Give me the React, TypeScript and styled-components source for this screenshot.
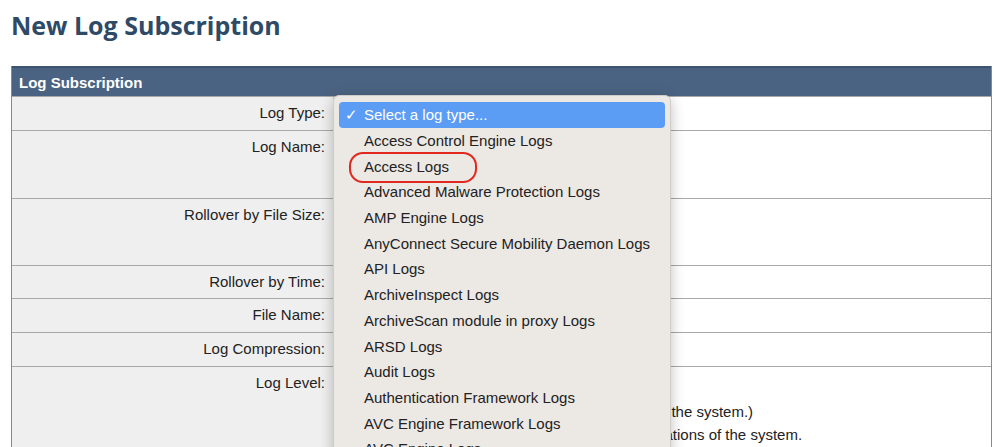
import styled, { createGlobalStyle } from 'styled-components';

const Global = createGlobalStyle`
  body { margin: 0; background: #fff; font-family: "Liberation Sans", Arial, sans-serif; }
`;

const Page = styled.div`
  padding: 8px 8px 0 11px;
  position: relative;
  height: 447px;
  overflow: hidden;
  box-sizing: border-box;
`;

const Title = styled.h1`
  margin: 0 0 24px;
  font-family: "Open Sans", sans-serif;
  font-size: 25px;
  font-weight: 700;
  color: #2e4a66;
`;

const Table = styled.div`
  width: 979px;
  border: 1px solid #8a8a8a;
  border-top: 0;
`;

const Header = styled.div`
  height: 28px;
  background: #4b6382;
  color: #fff;
  font-weight: 700;
  font-size: 15px;
  display: flex;
  align-items: center;
  padding-left: 7px;
  border-top: 2px solid #3d536f;
`;

const Row = styled.div<{ h: number }>`
  display: grid;
  grid-template-columns: 322px 1fr;
  height: ${p => p.h}px;
  border-top: 1px solid #a8a8a8;
  &:first-of-type { border-top: 0; }
`;

const Label = styled.div`
  background: #efefef;
  text-align: right;
  padding: 7px 8px 0 0;
  font-size: 15px;
  color: #222;
  border-right: 1px solid #c8c8c8;
`;

const Value = styled.div`
  padding: 10px 0 0 339px;
  font-size: 15px;
  line-height: 23px;
  color: #222;
  white-space: nowrap;
  margin-left: -322px;
  overflow: hidden;
`;

const Menu = styled.div`
  position: absolute;
  left: 333px;
  top: 95px;
  width: 338px;
  height: 380px;
  background: #ece8e4;
  border: 1px solid #d0ccc8;
  border-radius: 6px;
  box-shadow: 0 4px 14px rgba(0,0,0,0.25);
  padding: 6px 5px;
  box-sizing: border-box;
  font-size: 15px;
  color: #222;
`;

const Item = styled.div<{ selected?: boolean }>`
  height: 25.7px;
  display: flex;
  align-items: center;
  padding-left: ${p => (p.selected ? '6px' : '25px')};
  border-radius: 4px;
  background: ${p => (p.selected ? '#5b9df5' : 'transparent')};
  color: ${p => (p.selected ? '#fff' : '#222')};
  position: relative;
`;

const Check = styled.span`
  width: 19px;
`;

const Ring = styled.span`
  position: absolute;
  left: 10px;
  top: -1px;
  width: 124px;
  height: 27px;
  border: 2px solid #e0281f;
  border-radius: 14px;
`;

const items = [
  'Access Control Engine Logs',
  'Access Logs',
  'Advanced Malware Protection Logs',
  'AMP Engine Logs',
  'AnyConnect Secure Mobility Daemon Logs',
  'API Logs',
  'ArchiveInspect Logs',
  'ArchiveScan module in proxy Logs',
  'ARSD Logs',
  'Audit Logs',
  'Authentication Framework Logs',
  'AVC Engine Framework Logs',
  'AVC Engine Logs',
];

const rows: [string, number][] = [
  ['Log Type:', 33],
  ['Log Name:', 67],
  ['Rollover by File Size:', 66],
  ['Rollover by Time:', 32],
  ['File Name:', 33],
  ['Log Compression:', 33],
];

export default function App() {
  return (
    <>
      <Global />
      <Page>
        <Title>New Log Subscription</Title>
        <Table>
          <Header>Log Subscription</Header>
          {rows.map(([l, h]) => (
            <Row key={l} h={h}>
              <Label>{l}</Label>
              <div />
            </Row>
          ))}
          <Row h={120}>
            <Label>Log Level:</Label>
            <Value>
              Critical: (Only errors are logged.)<br />
              Warning: (Only warnings and errors reported by the system.)<br />
              Information: (Records the normal flow and operations of the system.
            </Value>
          </Row>
        </Table>
        <Menu>
          <Item selected><Check>✓</Check>Select a log type...</Item>
          {items.map(t => (
            <Item key={t}>
              {t === 'Access Logs' && <Ring />}
              {t}
            </Item>
          ))}
        </Menu>
      </Page>
    </>
  );
}
